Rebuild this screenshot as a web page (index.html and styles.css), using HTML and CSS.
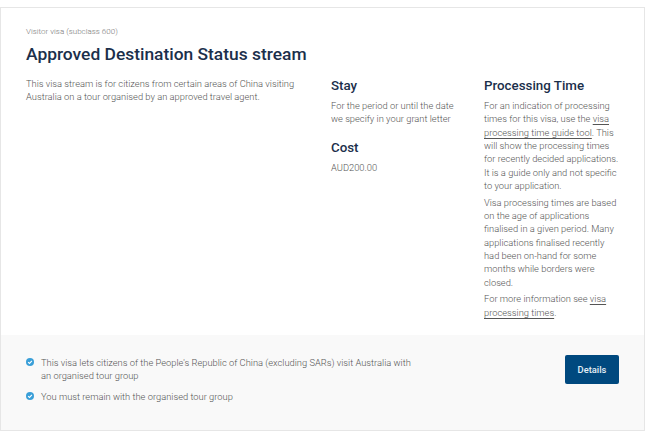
FILE: index.html
```html
<!DOCTYPE html>
<html lang="en">
<head>
<meta charset="utf-8">
<title>Approved Destination Status stream</title>
<link rel="stylesheet" href="styles.css">
</head>
<body>
<article class="card">
  <section class="main">
    <p class="eyebrow">Visitor visa (subclass 600)</p>
    <h1>Approved Destination Status stream</h1>
    <div class="columns">
      <div class="intro">
        <p>This visa stream is for citizens from certain areas of China visiting Australia on a tour organised by an approved travel agent.</p>
      </div>
      <div class="facts">
        <h2>Stay</h2>
        <p>For the period or until the date we specify in your grant letter</p>
        <h2 class="cost">Cost</h2>
        <p>AUD200.00</p>
      </div>
      <div class="processing">
        <h2>Processing Time</h2>
        <p>For an indication of processing times for this visa, use the <a href="#">visa processing time guide tool</a>. This will show the processing times for recently decided applications. It is a guide only and not specific to your application.</p>
        <p>Visa processing times are based on the age of applications finalised in a given period. Many applications finalised recently had been on-hand for some months while borders were closed.</p>
        <p>For more information see <a href="#">visa processing times</a>.</p>
      </div>
    </div>
  </section>
  <footer class="foot">
    <ul class="points">
      <li>
        <svg class="tick" viewBox="0 0 8 8" aria-hidden="true"><circle cx="4" cy="4" r="4" fill="#3a9fd8"/><path d="M2.1 4.1 3.5 5.4 5.9 2.8" fill="none" stroke="#fff" stroke-width="1.1"/></svg>
        <span>This visa lets citizens of the People's Republic of China (excluding SARs) visit Australia with an organised tour group</span>
      </li>
      <li>
        <svg class="tick" viewBox="0 0 8 8" aria-hidden="true"><circle cx="4" cy="4" r="4" fill="#3a9fd8"/><path d="M2.1 4.1 3.5 5.4 5.9 2.8" fill="none" stroke="#fff" stroke-width="1.1"/></svg>
        <span>You must remain with the organised tour group</span>
      </li>
    </ul>
    <a class="button" href="#">Details</a>
  </footer>
</article>
</body>
</html>
```
FILE: styles.css
```css
* { box-sizing: border-box; }
html, body { height: 100%; }
body {
  margin: 0;
  padding: 7px 4px 5px 0;
  background: #fff;
  font-family: Roboto, "Liberation Sans", sans-serif;
  font-weight: 300;
  font-size: 9.33px;
  line-height: 13.33px;
  color: #555;
}
p, h1, h2, ul { margin: 0; padding: 0; }
.card {
  height: 100%;
  display: flex;
  flex-direction: column;
  border: 1px solid #e6e6e6;
}
.main { flex: 1; padding: 18px 25px 0; }
.eyebrow { font-size: 8px; line-height: 11px; color: #777; }
h1 {
  margin-top: 6px;
  font-size: 17.4px;
  line-height: 22px;
  font-weight: 500;
  color: #1b2f4b;
}
.columns {
  margin-top: 12px;
  display: grid;
  grid-template-columns: 305px 153px 137px;
}
.intro { padding-right: 30px; }
.facts { padding-right: 20px; padding-top: 1px; }
.processing { padding-top: 1px; }
h2 {
  font-size: 13.33px;
  line-height: 16px;
  font-weight: 500;
  color: #1b2f4b;
  margin-bottom: 5px;
}
.cost { margin-top: 14px; }
.processing p + p { margin-top: 3.4px; }
.processing a { color: inherit; text-decoration: underline; text-decoration-thickness: 1px; text-underline-offset: 2px; }
.foot {
  height: 95px;
  display: flex;
  justify-content: space-between;
  align-items: flex-start;
  padding: 20px 25px 0;
  background: #f9f9f9;
}
.points { list-style: none; width: 393px; margin-top: 0.5px; display: flex; flex-direction: column; gap: 7.5px; }
.points li { display: flex; gap: 7px; }
.tick { flex: none; width: 8px; height: 8px; margin-top: 2px; }
.button {
  width: 54px;
  height: 29px;
  display: flex;
  align-items: center;
  justify-content: center;
  background: #00497f;
  border-radius: 2px;
  color: #e4eff7;
  font-size: 9.33px;
  font-weight: 500;
  text-decoration: none;
}
```
